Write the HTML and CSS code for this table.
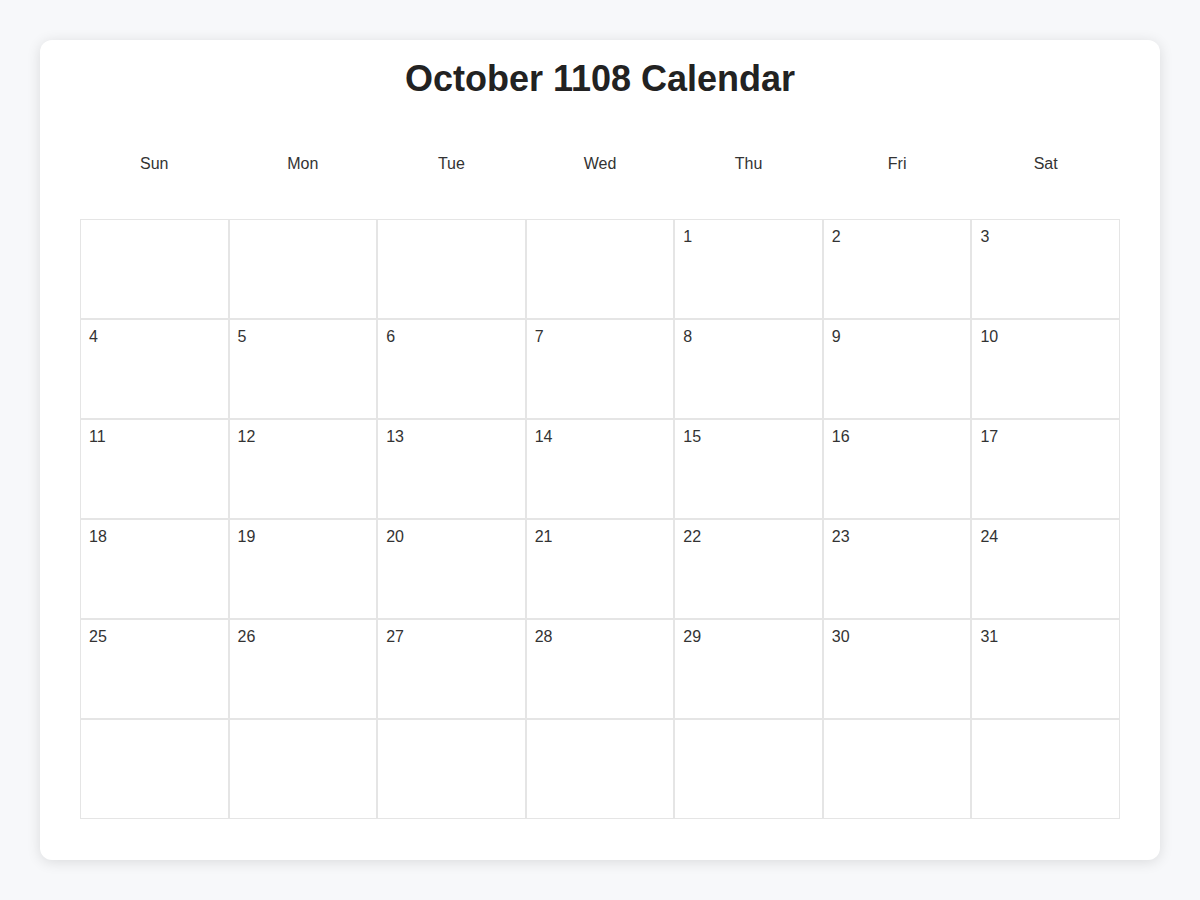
FILE: index.html
```html
<!DOCTYPE html>
<html lang="en">
<head>
<meta charset="utf-8">
<title>October 1108 Calendar</title>
<link rel="stylesheet" href="styles.css">
</head>
<body>
<div class="card">
  <h1 class="title">October 1108 Calendar</h1>
  <div class="weekdays">
    <div class="weekday">Sun</div>
    <div class="weekday">Mon</div>
    <div class="weekday">Tue</div>
    <div class="weekday">Wed</div>
    <div class="weekday">Thu</div>
    <div class="weekday">Fri</div>
    <div class="weekday">Sat</div>
  </div>
  <div class="days">
    <div class="day"></div>
    <div class="day"></div>
    <div class="day"></div>
    <div class="day"></div>
    <div class="day">1</div>
    <div class="day">2</div>
    <div class="day">3</div>
    <div class="day">4</div>
    <div class="day">5</div>
    <div class="day">6</div>
    <div class="day">7</div>
    <div class="day">8</div>
    <div class="day">9</div>
    <div class="day">10</div>
    <div class="day">11</div>
    <div class="day">12</div>
    <div class="day">13</div>
    <div class="day">14</div>
    <div class="day">15</div>
    <div class="day">16</div>
    <div class="day">17</div>
    <div class="day">18</div>
    <div class="day">19</div>
    <div class="day">20</div>
    <div class="day">21</div>
    <div class="day">22</div>
    <div class="day">23</div>
    <div class="day">24</div>
    <div class="day">25</div>
    <div class="day">26</div>
    <div class="day">27</div>
    <div class="day">28</div>
    <div class="day">29</div>
    <div class="day">30</div>
    <div class="day">31</div>
    <div class="day"></div>
    <div class="day"></div>
    <div class="day"></div>
    <div class="day"></div>
    <div class="day"></div>
    <div class="day"></div>
    <div class="day"></div>
  </div>
</div>
</body>
</html>
```
FILE: styles.css
```css
* {
  box-sizing: border-box;
}

html, body {
  margin: 0;
  padding: 0;
}

body {
  background: #f7f8fa;
  font-family: "Liberation Sans", Arial, sans-serif;
  color: #333;
  padding: 40px;
}

.card {
  width: 1120px;
  background: #fff;
  border-radius: 12px;
  box-shadow: 0 2px 14px rgba(0, 0, 0, 0.12);
  padding: 17px 40px 41px;
}

.title {
  margin: 0 0 43px;
  font-size: 36px;
  line-height: 44px;
  font-weight: bold;
  color: #222;
  text-align: center;
}

.weekdays {
  display: grid;
  grid-template-columns: repeat(7, 1fr);
  padding: 10px 0;
  margin-bottom: 35px;
}

.weekday {
  text-align: center;
  font-size: 16px;
  line-height: 20px;
  color: #333;
}

.days {
  display: grid;
  grid-template-columns: repeat(7, 1fr);
  grid-auto-rows: 100px;
}

.day {
  border: 1px solid #e5e5e5;
  padding: 7px 8px;
  font-size: 16px;
  line-height: 20px;
  color: #333;
}
```
